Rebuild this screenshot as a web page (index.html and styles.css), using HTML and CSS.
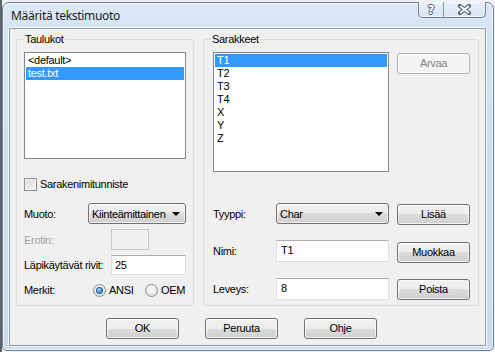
FILE: index.html
```html
<!DOCTYPE html>
<html lang="fi">
<head>
<meta charset="utf-8">
<title>Määritä tekstimuoto</title>
<link rel="stylesheet" href="styles.css">
</head>
<body>
<div class="window">
  <div class="titlebar">
    <span class="title">Määritä tekstimuoto</span>
    <div class="caption-btns">
      <span class="cap cap-help">?</span>
      <span class="cap cap-close">
        <svg width="13" height="11" viewBox="0 0 13 11">
          <path d="M2 2 L11 9 M11 2 L2 9" stroke="#4b5a6d" stroke-width="4" stroke-linecap="square" fill="none"/>
          <path d="M2 2 L11 9 M11 2 L2 9" stroke="#ffffff" stroke-width="2" stroke-linecap="butt" fill="none"/>
        </svg>
      </span>
    </div>
  </div>
  <div class="client">
    <div class="groups">
      <fieldset class="group group-left">
        <legend>Taulukot</legend>
        <div class="list list-tables">
          <div class="item">&lt;default&gt;</div>
          <div class="item sel">test.txt</div>
        </div>
        <div class="check-row"><span class="checkbox"></span><span>Sarakenimitunniste</span></div>
        <div class="row row-muoto">
          <span class="lbl">Muoto:</span>
          <div class="combo combo-muoto"><span>Kiinteämittainen</span><span class="arrow"></span></div>
        </div>
        <div class="row row-erotin">
          <span class="lbl lbl-wide disabled">Erotin:</span>
          <div class="field field-disabled"></div>
        </div>
        <div class="row row-rivit">
          <span class="lbl lbl-wide">Läpikäytävät rivit:</span>
          <div class="field field-rivit">25</div>
        </div>
        <div class="row row-merkit">
          <span class="lbl lbl-merkit">Merkit:</span>
          <span class="opt opt-ansi"><span class="radio checked"></span>ANSI</span>
          <span class="opt"><span class="radio"></span>OEM</span>
        </div>
      </fieldset>
      <fieldset class="group group-right">
        <legend>Sarakkeet</legend>
        <div class="cols-top">
          <div class="list list-cols">
            <div class="item sel">T1</div>
            <div class="item">T2</div>
            <div class="item">T3</div>
            <div class="item">T4</div>
            <div class="item">X</div>
            <div class="item">Y</div>
            <div class="item">Z</div>
          </div>
          <div class="btn btn-disabled btn-arvaa">Arvaa</div>
        </div>
        <div class="row row-tyyppi">
          <span class="lbl lbl-r">Tyyppi:</span>
          <div class="combo combo-char"><span>Char</span><span class="arrow"></span></div>
          <div class="btn btn-side btn-lisaa">Lisää</div>
        </div>
        <div class="row row-nimi">
          <span class="lbl lbl-r">Nimi:</span>
          <div class="field field-r">T1</div>
          <div class="btn btn-side btn-muokkaa">Muokkaa</div>
        </div>
        <div class="row row-leveys">
          <span class="lbl lbl-r">Leveys:</span>
          <div class="field field-r">8</div>
          <div class="btn btn-side btn-poista">Poista</div>
        </div>
      </fieldset>
    </div>
    <div class="buttons">
      <div class="btn">OK</div>
      <div class="btn">Peruuta</div>
      <div class="btn">Ohje</div>
    </div>
  </div>
</div>
</body>
</html>
```
FILE: styles.css
```css
* { box-sizing: border-box; }
html, body { margin: 0; padding: 0; }
body {
  width: 495px;
  height: 352px;
  overflow: hidden;
  background: linear-gradient(to right, #5a6472 0, #5a6472 2px, #eef1f4 2px);
  font-family: "Liberation Sans", Arial, sans-serif;
  font-size: 11px;
  letter-spacing: -0.3px;
  color: #000;
}
.window {
  margin: 2px 1px 0 2px;
  width: 492px;
  height: 349px;
  border: 1px solid #6f7d8e;
  border-radius: 7px 7px 5px 5px;
  background: linear-gradient(to bottom, #dde9f5 0, #d3e2f2 30px, #c9dbee 100%);
  box-shadow: inset 0 0 0 1px rgba(255,255,255,0.75);
  padding: 0 7px 4px 6px;
  display: flex;
  flex-direction: column;
}
.titlebar {
  height: 25px;
  display: flex;
  justify-content: space-between;
  align-items: flex-start;
}
.title {
  font-family: "Noto Sans", "Open Sans", sans-serif;
  font-size: 12px;
  letter-spacing: -0.3px;
  line-height: 16px;
  margin: 5px 0 0 2px;
  color: #1b1b1b;
}
.caption-btns {
  display: flex;
  margin-top: -1px;
  height: 16px;
  border: 1px solid #6d7b8d;
  border-top: none;
  border-radius: 0 0 5px 5px;
  background: linear-gradient(to bottom, #eaf1f8, #d6e3f0);
  box-shadow: inset 0 0 0 1px rgba(255,255,255,0.6);
}
.cap {
  display: flex;
  align-items: center;
  justify-content: center;
  height: 15px;
  letter-spacing: 0;
}
.cap-help {
  width: 25px;
  border-right: 1px solid #8a98aa;
  font-family: "DejaVu Sans", sans-serif;
  font-weight: bold;
  font-size: 12px;
  color: #fff;
  text-shadow: 1px 0 0 #4b5a6d, -1px 0 0 #4b5a6d, 0 1px 0 #4b5a6d, 0 -1px 0 #4b5a6d;
  padding-top: 1px;
}
.cap-close { width: 41px; }
.client {
  height: 318px;
  background: #f0f0f0;
  border: 1px solid #8898ad;
  box-shadow: 0 0 0 1px rgba(255,255,255,0.8);
  padding: 4px 6px 5px 6px;
  display: flex;
  flex-direction: column;
}
.groups {
  display: flex;
  gap: 9px;
}
.group {
  margin: 0;
  min-width: 0;
  height: 273px;
  border: 1px solid #d5dfe5;
  border-radius: 3px;
  padding: 6px 7px 0 7px;
}
.group legend {
  padding: 0 1px;
  margin-left: 0;
  line-height: 13px;
  height: 13px;
}
.group-left { width: 178px; }
.group-right { width: 276px; padding: 6px 8px 0 9px; }
.group-right legend { margin-left: -2px; }
.list {
  background: #fff;
  border: 1px solid #828790;
  padding: 1px;
}
.item {
  height: 13px;
  line-height: 13px;
  padding-left: 2px;
  white-space: nowrap;
}
.item.sel { background: #3399ff; color: #fff; }
.list-tables { height: 107px; }
.check-row {
  margin-top: 19px;
  height: 13px;
  display: flex;
  align-items: center;
  gap: 3px;
  line-height: 13px;
}
.checkbox {
  width: 13px;
  height: 13px;
  border: 1px solid #8e8f8f;
  background: linear-gradient(135deg, #d8d8d8, #f7f7f7);
  box-shadow: inset 0 0 0 1px #f4f4f4;
}
.row {
  display: flex;
  align-items: center;
}
.lbl { white-space: nowrap; }
.row-muoto { margin-top: 12px; height: 21px; justify-content: space-between; }
.combo {
  height: 100%;
  border: 1px solid #707070;
  border-radius: 3px;
  background: linear-gradient(to bottom, #f2f2f2 0%, #ebebeb 50%, #dddddd 50%, #cfcfcf 100%);
  box-shadow: inset 0 0 0 1px rgba(255,255,255,0.7);
  display: flex;
  align-items: center;
  justify-content: space-between;
  padding: 0 5px 0 3px;
}
.arrow {
  width: 0;
  height: 0;
  border-left: 4px solid transparent;
  border-right: 4px solid transparent;
  border-top: 4px solid #000;
}
.combo-muoto { width: 98px; }
.row-erotin { margin-top: 5px; height: 21px; }
.lbl-wide { width: 87px; }
.disabled { color: #a0a0a0; }
.field {
  height: 100%;
  background: #fff;
  border: 1px solid #dbdfe6;
  border-top-color: #abadb3;
  padding-left: 3px;
  display: flex;
  align-items: center;
}
.field-disabled {
  width: 38px;
  background: #f0f0f0;
  border-color: #c8c8c8;
}
.row-rivit { margin-top: 5px; height: 20px; }
.field-rivit { width: 75px; }
.row-merkit { margin-top: 8px; height: 14px; }
.lbl-merkit { width: 69px; }
.opt { display: flex; align-items: center; gap: 3px; }
.opt-ansi { width: 52px; }
.radio {
  width: 13px;
  height: 13px;
  border-radius: 50%;
  border: 1px solid #8e9297;
  background: radial-gradient(circle at 50% 40%, #ffffff 0, #f0f0f0 40%, #d4d4d4 100%);
  display: flex;
  align-items: center;
  justify-content: center;
}
.radio.checked::after {
  content: "";
  width: 5px;
  height: 5px;
  border-radius: 50%;
  background: radial-gradient(circle at 40% 35%, #b9e1ff 0, #3d8ed6 50%, #1a4f85 100%);
  box-shadow: 0 0 0 1px #2a5f97;
}
.cols-top { display: flex; align-items: flex-start; gap: 8px; }
.list-cols { width: 176px; height: 120px; }
.btn {
  width: 73px;
  height: 21px;
  border: 1px solid #707070;
  border-radius: 3px;
  background: linear-gradient(to bottom, #f2f2f2 0%, #ebebeb 50%, #dddddd 50%, #cfcfcf 100%);
  box-shadow: inset 0 0 0 1px rgba(255,255,255,0.75);
  display: flex;
  align-items: center;
  justify-content: center;
  line-height: 13px;
  flex-shrink: 0;
}
.btn-disabled {
  border-color: #adb2b5;
  background: #f4f4f4;
  color: #838383;
}
.btn-arvaa { margin-top: 1px; }
.lbl-r { width: 63px; }
.combo-char { width: 113px; }
.field-r { width: 113px; align-items: flex-start; padding: 3px 0 0 4px; }
.btn-side { margin-left: 8px; align-self: flex-start; }
.row-tyyppi { margin-top: 31px; height: 21px; }
.btn-lisaa { margin-top: 1px; }
.row-nimi { margin-top: 16px; height: 22px; }
.btn-muokkaa { margin-top: 2px; }
.row-leveys { margin-top: 16px; height: 22px; }
.btn-poista { margin-top: 1px; }
.buttons {
  margin-top: 12px;
  margin-left: 90px;
  display: flex;
  gap: 26px;
}
```
